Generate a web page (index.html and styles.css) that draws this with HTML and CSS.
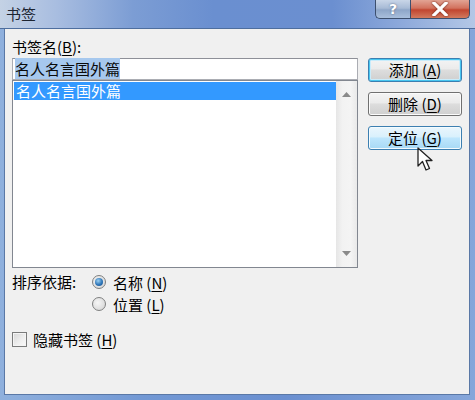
FILE: index.html
```html
<!DOCTYPE html>
<html lang="zh-CN">
<head>
<meta charset="utf-8">
<title>书签</title>
<link rel="stylesheet" href="styles.css">
</head>
<body>
<div class="window">
  <div class="titlebar">
    <span class="title">书签</span>
    <div class="caption">
      <div class="cap help"><span>?</span></div>
      <div class="cap close">
        <svg width="18" height="14" viewBox="0 0 18 14"><path d="M3 1 L15 13 M15 1 L3 13" stroke="#fff" stroke-width="3.2" stroke-linecap="square"/></svg>
      </div>
    </div>
  </div>
  <div class="client">
    <div class="top">
      <div class="leftcol">
        <div class="label">书签名(<u>B</u>):</div>
        <div class="input"><span class="sel">名人名言国外篇</span></div>
        <div class="list">
          <div class="items">
            <div class="item selected">名人名言国外篇</div>
          </div>
          <div class="scrollbar">
            <svg width="9" height="5" viewBox="0 0 9 5"><path d="M0 5 L4.5 0 L9 5 Z" fill="#8a8a8a"/></svg>
            <svg width="9" height="5" viewBox="0 0 9 5"><path d="M0 0 L4.5 5 L9 0 Z" fill="#8a8a8a"/></svg>
          </div>
        </div>
      </div>
      <div class="buttons">
        <div class="btn default">添加 (<u>A</u>)</div>
        <div class="btn">删除 (<u>D</u>)</div>
        <div class="btn hover">定位 (<u>G</u>)</div>
      </div>
    </div>
    <div class="sort">
      <div class="sortlabel">排序依据:</div>
      <div class="radios">
        <div class="radiorow"><span class="radio on"></span><span>名称 (<u>N</u>)</span></div>
        <div class="radiorow"><span class="radio"></span><span>位置 (<u>L</u>)</span></div>
      </div>
    </div>
    <div class="checkrow"><span class="checkbox"></span><span>隐藏书签 (<u>H</u>)</span></div>
  </div>
  <svg class="cursor" width="22" height="26" viewBox="0 0 22 26">
    <path d="M1 1 L1 19 L5.5 14.5 L9 23 L12.5 21.5 L9 13.5 L15 13.5 Z" fill="#fff" stroke="#222" stroke-width="1.3" stroke-linejoin="round"/>
  </svg>
</div>
</body>
</html>
```

FILE: styles.css
```css
* { box-sizing: border-box; }
html, body { margin: 0; padding: 0; }
body {
  width: 475px;
  height: 400px;
  overflow: hidden;
  font-family: "Noto Sans CJK SC", "Liberation Sans", sans-serif;
  font-size: 15px;
  color: #000;
}
u { text-decoration: underline; text-underline-offset: 2px; }
.window {
  position: relative;
  width: 475px;
  height: 400px;
  background: linear-gradient(90deg, #8fb0dd 0%, #7298d4 30%, #6a8fd0 60%, #86a6da 100%);
  display: flex;
  flex-direction: column;
}
.titlebar {
  height: 29px;
  display: flex;
  justify-content: space-between;
  align-items: flex-start;
  background: linear-gradient(90deg, #c4d2e5 0%, #a8bde0 12%, #7c9dd4 28%, #6a8fd0 45%, #6b8fd0 70%, #8eaadb 85%, #b3c7e6 100%);
  border-bottom: 1px solid #4e6e9e;
}
.title {
  padding: 4px 0 0 6px;
  line-height: 20px;
  color: #1c2430;
  font-size: 15px;
}
.caption {
  display: flex;
  margin-right: 5px;
}
.cap {
  height: 19px;
  display: flex;
  align-items: center;
  justify-content: center;
  border: 1px solid #3c4f6e;
  border-top: none;
}
.help {
  width: 35px;
  border-radius: 0 0 0 5px;
  border-right: none;
  background: linear-gradient(180deg, #c9d6e8 0%, #a8bbd6 45%, #8ea6c8 55%, #a9bfdc 100%);
  color: #fff;
  font-family: "DejaVu Sans", sans-serif;
  font-weight: bold;
  font-size: 14px;
  text-shadow: 0 0 2px #4a5c78;
}
.close {
  width: 60px;
  border-radius: 0 0 5px 0;
  background: linear-gradient(180deg, #e2a494 0%, #d2725e 45%, #c14630 55%, #d27a5e 100%);
}
.close svg { filter: drop-shadow(0 0 1px #6a1d10); }
.client {
  margin: 0 5px 5px 4px;
  flex: 1;
  background: #f0f0f0;
  border: 1px solid #5a78a6;
  border-top: none;
  padding: 0 0 0 7px;
  display: flex;
  flex-direction: column;
}
.top {
  display: flex;
  gap: 10px;
}
.leftcol {
  width: 346px;
  padding-top: 8px;
  display: flex;
  flex-direction: column;
}
.label {
  line-height: 20px;
  height: 21px;
}
.input {
  height: 22px;
  border: 1px solid #abadb3;
  border-top-color: #8e9098;
  background: #fff;
  padding: 0 2px;
  line-height: 20px;
}
.sel {
  background: #a6c8ee;
  color: #0a0a0a;
}
.list {
  height: 188px;
  border: 1px solid #828790;
  background: #fff;
  display: flex;
  padding: 1px 0 0 1px;
}
.items {
  flex: 1;
}
.item {
  height: 18px;
  line-height: 17px;
  padding-left: 2px;
}
.item.selected {
  background: #3399ff;
  color: #fff;
}
.scrollbar {
  width: 21px;
  margin-top: -1px;
  background: linear-gradient(90deg, #e6e6e6 0%, #f2f2f2 30%, #f4f4f4 70%, #e9e9e9 100%);
  display: flex;
  flex-direction: column;
  justify-content: space-between;
  align-items: center;
  padding: 11px 0 11px;
}
.buttons {
  padding-top: 29px;
  display: flex;
  flex-direction: column;
  gap: 10px;
}
.btn {
  width: 94px;
  height: 24px;
  border: 1px solid #707070;
  border-radius: 3px;
  background: linear-gradient(180deg, #f4f4f4 0%, #ebebeb 45%, #dddddd 50%, #cfcfcf 100%);
  box-shadow: inset 0 0 0 1px #fbfbfb;
  text-align: center;
  line-height: 22px;
}
.btn.default {
  border-color: #3c7fb1;
  box-shadow: inset 0 0 0 1px #47c6f0, inset 0 0 0 2px #c9ecfb;
}
.btn.hover {
  border-color: #3c7fb1;
  background: linear-gradient(180deg, #eaf6fd 0%, #d9f0fc 45%, #bee6fd 50%, #a7d9f5 100%);
  box-shadow: inset 0 0 0 1px #f4fbfe;
}
.sort {
  display: flex;
  margin-top: 3px;
}
.sortlabel {
  width: 80px;
  line-height: 22px;
}
.radios {
  display: flex;
  flex-direction: column;
}
.radiorow {
  height: 22px;
  display: flex;
  align-items: center;
  gap: 7px;
}
.radio {
  width: 14px;
  height: 14px;
  border-radius: 50%;
  border: 1px solid #7f8080;
  background: radial-gradient(circle at 40% 40%, #f6f6f6 0%, #dcdcdc 70%, #cfcfcf 100%);
  position: relative;
}
.radio.on::after {
  content: "";
  position: absolute;
  left: 2px;
  top: 2px;
  width: 8px;
  height: 8px;
  border-radius: 50%;
  background: radial-gradient(circle at 40% 35%, #9bd0f2 0%, #2f76b8 55%, #1a4f8a 100%);
}
.checkrow {
  margin-top: 13px;
  height: 22px;
  display: flex;
  align-items: center;
  gap: 6px;
}
.checkbox {
  width: 15px;
  height: 15px;
  border: 1px solid #7a7b7b;
  background: linear-gradient(135deg, #d6d6d6 0%, #efefef 60%, #fafafa 100%);
  box-shadow: inset 0 0 0 1px #f4f4f4;
}
.cursor {
  position: absolute;
  left: 417px;
  top: 147px;
}
```
